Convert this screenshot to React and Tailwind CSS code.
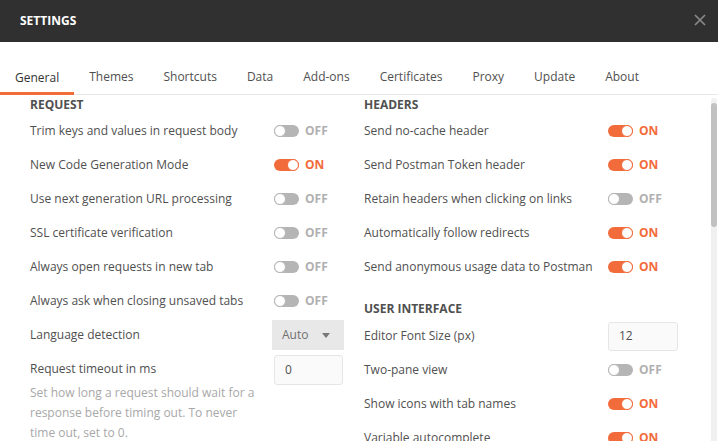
const tabs = ["General", "Themes", "Shortcuts", "Data", "Add-ons", "Certificates", "Proxy", "Update", "About"];

const Toggle = ({ on }) => (
    <div className="flex items-center gap-[6px]">
        <div
            className={
                on
                    ? "w-[25px] h-[12px] rounded-full bg-[#f26b3a] flex items-center justify-end"
                    : "w-[25px] h-[12px] rounded-full bg-[#b5b5b5] flex items-center justify-start"
            }
        >
            <div
                className={
                    on
                        ? "w-[12px] h-[12px] rounded-full bg-white border border-[#f26b3a]"
                        : "w-[12px] h-[12px] rounded-full bg-white border border-[#b5b5b5]"
                }
            />
        </div>
        <span className={on ? "text-[12px] font-bold text-[#f26b3a]" : "text-[12px] font-bold text-[#b0b0b0]"}>
            {on ? "ON" : "OFF"}
        </span>
    </div>
);

const Row = ({ label, children }) => (
    <div className="h-[34px] flex items-center">
        <div className="w-[244px] text-[12px] text-[#505050] whitespace-nowrap">{label}</div>
        {children}
    </div>
);

const Heading = ({ children, className = "" }) => (
    <div className={"flex items-center text-[12px] font-bold text-[#505050] " + className}>{children}</div>
);

export default function App() {
    return (
        <div className="w-[718px] h-[441px] flex flex-col bg-white overflow-hidden" style={{ fontFamily: '"Open Sans", sans-serif' }}>
            {/* title bar */}
            <div className="h-[42px] bg-[#303030] flex items-center justify-between pl-[20px] pr-[12px] shrink-0">
                <span className="text-[12px] font-bold text-white">SETTINGS</span>
                <svg width="12" height="12" viewBox="0 0 12 12" className="mb-[3px]">
                    <path d="M1 1 L11 11 M11 1 L1 11" stroke="#8c8c8c" strokeWidth="1.6" />
                </svg>
            </div>

            {/* tabs */}
            <div className="h-[53px] flex items-end border-b border-[#e8e8e8] shrink-0">
                {tabs.map((t, i) => (
                    <div
                        key={t}
                        className={
                            i === 0
                                ? "px-[15px] h-[26px] flex items-start text-[12px] text-[#333] border-b-[3px] border-[#f26b3a] -mb-[1px]"
                                : "px-[15px] h-[26px] flex items-start text-[12px] text-[#505050]"
                        }
                    >
                        {t}
                    </div>
                ))}
            </div>

            {/* body */}
            <div className="flex-1 flex overflow-hidden">
                <div className="flex-1 flex pl-[30px]">
                    {/* left column */}
                    <div className="w-[334px]">
                        <Heading className="h-[19px]">REQUEST</Heading>
                        <Row label="Trim keys and values in request body"><Toggle /></Row>
                        <Row label="New Code Generation Mode"><Toggle on /></Row>
                        <Row label="Use next generation URL processing"><Toggle /></Row>
                        <Row label="SSL certificate verification"><Toggle /></Row>
                        <Row label="Always open requests in new tab"><Toggle /></Row>
                        <Row label="Always ask when closing unsaved tabs"><Toggle /></Row>
                        <Row label="Language detection">
                            <div className="w-[72px] h-[30px] bg-[#e8e8e8] -ml-[2px] flex items-center justify-between pl-[10px] pr-[14px] text-[12px] text-[#707070]">
                                <span>Auto</span>
                                <svg width="8" height="5" viewBox="0 0 8 5">
                                    <path d="M0 0 L8 0 L4 5 Z" fill="#777" />
                                </svg>
                            </div>
                        </Row>
                        <div className="flex">
                            <div className="w-[244px] pt-[7px]">
                                <div className="text-[12px] leading-[20px] text-[#505050]">Request timeout in ms</div>
                                <div className="text-[12px] leading-[20px] text-[#a8a8a8] w-[232px] pt-[4px]">
                                    Set how long a request should wait for a response before timing out. To never time out, set to 0.
                                </div>
                            </div>
                            <div className="mt-[3px] w-[69px] h-[30px] bg-[#fafafa] border border-[#e6e6e6] rounded-[3px] flex items-center pl-[10px] text-[12px] text-[#505050]">
                                0
                            </div>
                        </div>
                    </div>

                    {/* right column */}
                    <div className="w-[334px]">
                        <Heading className="h-[19px]">HEADERS</Heading>
                        <Row label="Send no-cache header"><Toggle on /></Row>
                        <Row label="Send Postman Token header"><Toggle on /></Row>
                        <Row label="Retain headers when clicking on links"><Toggle /></Row>
                        <Row label="Automatically follow redirects"><Toggle on /></Row>
                        <Row label="Send anonymous usage data to Postman"><Toggle on /></Row>
                        <Heading className="mt-[15px] h-[20px]">USER INTERFACE</Heading>
                        <Row label="Editor Font Size (px)">
                            <div className="w-[70px] h-[29px] bg-[#fafafa] border border-[#e6e6e6] rounded-[3px] flex items-center pl-[10px] text-[12px] text-[#505050]">
                                12
                            </div>
                        </Row>
                        <Row label="Two-pane view"><Toggle /></Row>
                        <Row label="Show icons with tab names"><Toggle on /></Row>
                        <Row label="Variable autocomplete"><Toggle on /></Row>
                    </div>
                </div>

                {/* scrollbar */}
                <div className="w-[6px] mr-[1px] mt-[3px] rounded-t-[3px] bg-[#f0f0f0] pt-[5px]">
                    <div className="h-[124px] rounded-[3px] bg-[#c1c1c1]" />
                </div>
            </div>
        </div>
    );
}
